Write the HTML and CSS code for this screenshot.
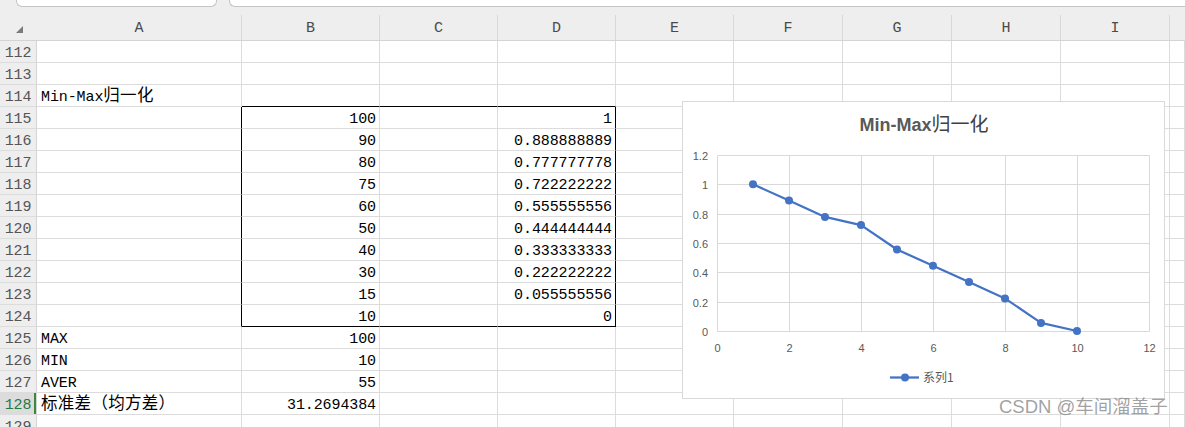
FILE: index.html
```html
<!DOCTYPE html>
<html>
<head>
<meta charset="utf-8">
<link rel="stylesheet" href="styles.css">
</head>
<body>
<div class="sheet">
  <div class="topbar"><div class="box box1"></div><div class="box box2"></div></div>
  <div class="cols">
    <div class="corner"><div class="tri"></div></div>
    <div class="ch">A</div><div class="ch">B</div><div class="ch">C</div><div class="ch">D</div><div class="ch">E</div><div class="ch">F</div><div class="ch">G</div><div class="ch">H</div><div class="ch">I</div><div class="ch last"></div>
  </div>
  <div class="row"><div class="h">112</div><div></div><div></div><div></div><div></div><div></div><div></div><div></div><div></div><div></div><div></div></div>
  <div class="row"><div class="h">113</div><div></div><div></div><div></div><div></div><div></div><div></div><div></div><div></div><div></div><div></div></div>
  <div class="row"><div class="h">114</div><div>Min-Max<span class="cjk">归一化</span></div><div class="bb"></div><div class="bb"></div><div class="bb"></div><div></div><div></div><div></div><div></div><div></div><div></div></div>
  <div class="row"><div class="h">115</div><div class="br"></div><div class="n">100</div><div></div><div class="n br">1</div><div></div><div></div><div></div><div></div><div></div><div></div></div>
  <div class="row"><div class="h">116</div><div class="br"></div><div class="n">90</div><div></div><div class="n br">0.888888889</div><div></div><div></div><div></div><div></div><div></div><div></div></div>
  <div class="row"><div class="h">117</div><div class="br"></div><div class="n">80</div><div></div><div class="n br">0.777777778</div><div></div><div></div><div></div><div></div><div></div><div></div></div>
  <div class="row"><div class="h">118</div><div class="br"></div><div class="n">75</div><div></div><div class="n br">0.722222222</div><div></div><div></div><div></div><div></div><div></div><div></div></div>
  <div class="row"><div class="h">119</div><div class="br"></div><div class="n">60</div><div></div><div class="n br">0.555555556</div><div></div><div></div><div></div><div></div><div></div><div></div></div>
  <div class="row"><div class="h">120</div><div class="br"></div><div class="n">50</div><div></div><div class="n br">0.444444444</div><div></div><div></div><div></div><div></div><div></div><div></div></div>
  <div class="row"><div class="h">121</div><div class="br"></div><div class="n">40</div><div></div><div class="n br">0.333333333</div><div></div><div></div><div></div><div></div><div></div><div></div></div>
  <div class="row"><div class="h">122</div><div class="br"></div><div class="n">30</div><div></div><div class="n br">0.222222222</div><div></div><div></div><div></div><div></div><div></div><div></div></div>
  <div class="row"><div class="h">123</div><div class="br"></div><div class="n">15</div><div></div><div class="n br">0.055555556</div><div></div><div></div><div></div><div></div><div></div><div></div></div>
  <div class="row"><div class="h">124</div><div class="br"></div><div class="n bb">10</div><div class="bb"></div><div class="n br bb">0</div><div></div><div></div><div></div><div></div><div></div><div></div></div>
  <div class="row"><div class="h">125</div><div>MAX</div><div class="n">100</div><div></div><div></div><div></div><div></div><div></div><div></div><div></div><div></div></div>
  <div class="row"><div class="h">126</div><div>MIN</div><div class="n">10</div><div></div><div></div><div></div><div></div><div></div><div></div><div></div><div></div></div>
  <div class="row"><div class="h">127</div><div>AVER</div><div class="n">55</div><div></div><div></div><div></div><div></div><div></div><div></div><div></div><div></div></div>
  <div class="row"><div class="h sel">128</div><div><span class="cjk">标准差（均方差）</span></div><div class="n">31.2694384</div><div></div><div></div><div></div><div></div><div></div><div></div><div></div><div></div></div>
  <div class="row"><div class="h">129</div><div></div><div></div><div></div><div></div><div></div><div></div><div></div><div></div><div></div><div></div></div>

  <div class="chart">
    <svg class="plot" width="483" height="298" viewBox="0 0 483 298">
      <g stroke="#d9d9d9" stroke-width="1" fill="none">
        <path d="M35.5 54.5V230.5M107.5 54.5V230.5M179.5 54.5V230.5M251.5 54.5V230.5M323.5 54.5V230.5M395.5 54.5V230.5M467.5 54.5V230.5"/>
        <path d="M35.5 54.5H467.5M35.5 83.5H467.5M35.5 113.5H467.5M35.5 142.5H467.5M35.5 171.5H467.5M35.5 201.5H467.5M35.5 230.5H467.5"/>
      </g>
      <polyline points="71,83.3 107,99.6 143,115.9 179,124.1 215,148.5 251,164.8 287,181.1 323,197.4 359,221.9 395,230" fill="none" stroke="#4472c4" stroke-width="2.25" stroke-linejoin="round"/>
      <g fill="#4472c4">
        <circle cx="71" cy="83.3" r="4"/><circle cx="107" cy="99.6" r="4"/><circle cx="143" cy="115.9" r="4"/><circle cx="179" cy="124.1" r="4"/><circle cx="215" cy="148.5" r="4"/><circle cx="251" cy="164.8" r="4"/><circle cx="287" cy="181.1" r="4"/><circle cx="323" cy="197.4" r="4"/><circle cx="359" cy="221.9" r="4"/><circle cx="395" cy="230" r="4"/>
      </g>
      <g class="ax" text-anchor="end">
        <text x="26" y="59">1.2</text><text x="26" y="88">1</text><text x="26" y="118">0.8</text><text x="26" y="147">0.6</text><text x="26" y="176">0.4</text><text x="26" y="206">0.2</text><text x="26" y="235">0</text>
      </g>
      <g class="ax" text-anchor="middle">
        <text x="35.5" y="251">0</text><text x="107.5" y="251">2</text><text x="179.5" y="251">4</text><text x="251.5" y="251">6</text><text x="323.5" y="251">8</text><text x="395.5" y="251">10</text><text x="467.5" y="251">12</text>
      </g>
      <text class="title" x="242" y="30" text-anchor="middle">Min-Max<tspan class="tcjk">归一化</tspan></text>
      <line x1="208" y1="276.5" x2="237" y2="276.5" stroke="#4472c4" stroke-width="2.25"/>
      <circle cx="223" cy="276.5" r="4" fill="#4472c4"/>
      <text class="leg" x="241" y="281">系列1</text>
    </svg>
  </div>
  <div class="wm">CSDN @车间溜盖子</div>
</div>
</body>
</html>
```
FILE: styles.css
```css
:root {
  --cols: 37px 205px 138px 118px 118px 118px 109px 109px 109px 109px 1fr;
}
html, body {
  margin: 0;
  padding: 0;
  background: #fff;
}
body {
  width: 1185px;
  height: 427px;
  overflow: hidden;
  font-family: "Liberation Mono", "Noto Sans CJK SC", monospace;
}
.sheet {
  position: relative;
  width: 1185px;
  height: 427px;
  overflow: hidden;
}
.topbar {
  height: 7px;
  background: #eeeeee;
  display: flex;
  align-items: flex-start;
}
.box {
  height: 6px;
  background: #fff;
  border: 1px solid #c4c4c4;
  border-top: none;
  border-radius: 0 0 6px 6px;
}
.box1 {
  margin-left: 16px;
  width: 199px;
}
.box2 {
  margin-left: 12px;
  flex: 1;
  border-right: none;
  border-radius: 0 0 0 6px;
}
.cols {
  display: grid;
  grid-template-columns: var(--cols);
  height: 34px;
  background: #eeeeee;
  border-bottom: 1px solid #d4d4d4;
  box-sizing: border-box;
}
.corner {
  display: flex;
}
.tri {
  width: 0;
  height: 0;
  margin: 19px 0 0 16px;
  border-bottom: 7px solid #7a7a7a;
  border-left: 7px solid transparent;
}
.ch {
  align-self: end;
  height: 25px;
  border-right: 1px solid #d8d8d8;
  box-sizing: border-box;
  text-align: center;
  padding-top: 5px;
  line-height: 18px;
  font-size: 15px;
  color: #4a4a4a;
}
.ch.last {
  border-right: none;
}
.row {
  display: grid;
  grid-template-columns: var(--cols);
  height: 22px;
}
.row > div {
  border-right: 1px solid #dcdcdc;
  border-bottom: 1px solid #dcdcdc;
  box-sizing: border-box;
  padding: 4px 3px 0 4px;
  line-height: 17px;
  font-size: 15px;
  white-space: nowrap;
  color: #000;
  letter-spacing: -0.1px;
  min-width: 0;
}
.row > div.h {
  background: #eeeeee;
  text-align: center;
  color: #555;
  border-right-color: #d4d4d4;
  padding: 4px 0 0 0;
}
.row > div.h.sel {
  background: #dcdcdc;
  color: #1f7a45;
  box-shadow: inset -2px 0 0 #3a8a3a;
}
.row > div.n {
  text-align: right;
}
.row > div.bb {
  border-bottom-color: #000;
}
.row > div.br {
  border-right-color: #000;
}
.cjk {
  font-family: "Noto Sans CJK SC", sans-serif;
  font-size: 16.5px;
  line-height: 0;
  letter-spacing: 0.3px;
}
.chart {
  position: absolute;
  left: 682px;
  top: 101px;
  width: 483px;
  height: 298px;
  background: #fff;
  box-shadow: inset 0 0 0 1px #d9d9d9;
}
.plot {
  display: block;
}
.ax {
  font-family: "Liberation Sans", sans-serif;
  font-size: 11px;
  fill: #595959;
}
.title {
  font-family: "Liberation Sans", "Noto Sans CJK SC", sans-serif;
  font-size: 18px;
  font-weight: 700;
  fill: #595959;
}
.tcjk {
  font-family: "Noto Sans CJK SC", sans-serif;
  font-size: 19px;
  font-weight: 400;
  fill: #404040;
}
.leg {
  font-family: "Noto Sans CJK SC", sans-serif;
  font-size: 12px;
  fill: #595959;
}
.wm {
  position: absolute;
  left: 999px;
  top: 396px;
  font-family: "Liberation Sans", "Noto Sans CJK SC", sans-serif;
  font-size: 18.5px;
  line-height: 22px;
  color: rgba(120, 120, 120, 0.7);
  white-space: nowrap;
}
```
